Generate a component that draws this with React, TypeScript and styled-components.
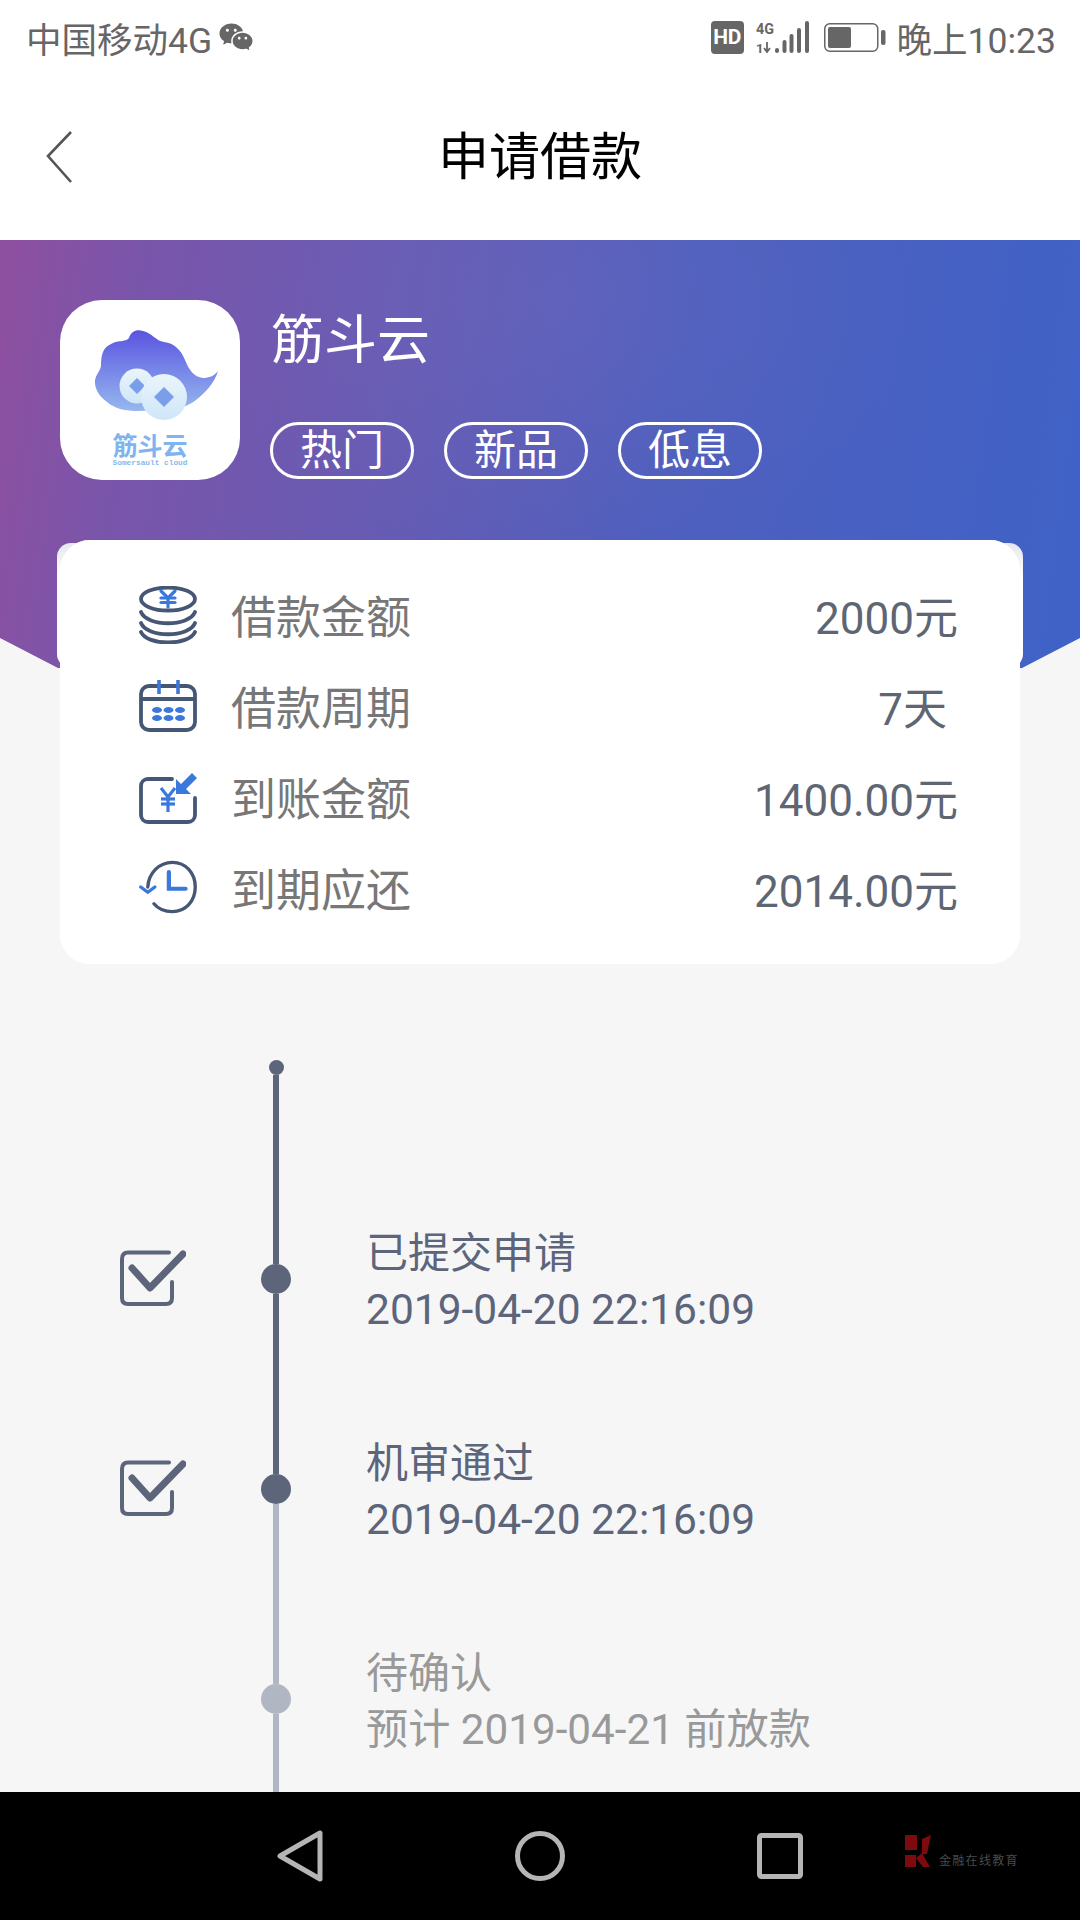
import React from "react";
import styled, { createGlobalStyle } from "styled-components";
import { RiWechatFill } from "react-icons/ri";

const GlobalStyle = createGlobalStyle`
  html, body {
    margin: 0;
    padding: 0;
    background: #f6f6f7;
  }
  * {
    box-sizing: border-box;
  }
`;

const slate = "#5c657a";
const muted = "#b0b6c2";
const iconDark = "#465775";
const iconBlue = "#3b78dc";

const Page = styled.div`
  width: 1080px;
  height: 1920px;
  overflow: hidden;
  display: flex;
  flex-direction: column;
  background: #f6f6f7;
  font-family: Roboto, "Noto Sans CJK SC", sans-serif;
`;

const StatusBar = styled.div`
  height: 74px;
  padding: 0 24px 0 26px;
  display: flex;
  align-items: center;
  justify-content: space-between;
  background: #fff;
  color: #666;
  font-size: 35.5px;
`;

const StatusGroup = styled.div`
  display: flex;
  align-items: center;
`;

const Carrier = styled.span`
  margin-right: 6px;
`;

const HdBadge = styled.span`
  width: 33px;
  height: 33px;
  margin-right: 12px;
  border-radius: 4px;
  background: #666;
  color: #fff;
  font-size: 21px;
  font-weight: 700;
  line-height: 33px;
  text-align: center;
  letter-spacing: -0.5px;
`;

const Clock = styled.span`
  margin-left: 11px;
`;

const TopBar = styled.div`
  height: 166px;
  padding: 0 46px;
  display: grid;
  grid-template-columns: 1fr auto 1fr;
  align-items: center;
  background: #fff;
`;

const Title = styled.h1`
  margin: 0;
  color: #000;
  font-size: 51px;
  font-weight: 400;
  line-height: 1;
`;

const Banner = styled.div`
  height: 440px;
  padding: 60px 0 0 60px;
  display: flex;
  gap: 30px;
  align-items: flex-start;
  clip-path: polygon(0 0, 100% 0, 100% 398px, 1022px 428px, 540px 440px, 58px 428px, 0 398px);
  background:
    radial-gradient(ellipse 380px 260px at 560px 60px, rgba(130, 120, 200, 0.18), transparent),
    linear-gradient(98deg, #8f4f9f 0%, #7a55aa 12%, #675bb3 36%, #4f5fbd 60%, #3f62c7 100%);
`;

const LogoTile = styled.div`
  width: 180px;
  height: 180px;
  flex: none;
  border-radius: 42px;
  background: #fff;
  overflow: hidden;
`;

const Product = styled.div`
  display: flex;
  flex-direction: column;
  padding-top: 9px;
`;

const ProductName = styled.div`
  color: #fff;
  font-size: 53px;
  line-height: 64px;
  margin-left: 1px;
`;

const Tags = styled.div`
  margin-top: 49px;
  display: flex;
  gap: 30px;
`;

const Tag = styled.span`
  width: 144px;
  height: 57px;
  border: 3px solid #fff;
  border-radius: 29px;
  color: #fff;
  font-size: 42px;
  line-height: 51px;
  text-align: center;
`;

const Card = styled.section`
  position: relative;
  margin: -140px 60px 0;
  height: 424px;
  padding: 29px 62px 0 79px;
  border-radius: 30px;
  background: #fff;

  &::before {
    content: "";
    position: absolute;
    z-index: 0;
    top: 3px;
    left: -3px;
    right: -3px;
    height: 125px;
    border-radius: 14px;
    background: linear-gradient(#e6e6ee, #fff 34px);
  }

  &::after {
    content: "";
    position: absolute;
    z-index: 0;
    inset: 0;
    border-radius: 30px;
    background: #fff;
  }
`;

const CardRow = styled.div`
  position: relative;
  z-index: 1;
  height: 91px;
  display: flex;
  align-items: center;
`;

const IconSlot = styled.div<{ $nudge: number }>`
  width: 58px;
  margin-right: 34px;
  flex: none;
  display: flex;
  justify-content: center;
  transform: translateY(${(p) => p.$nudge}px);
`;

const RowLabel = styled.span`
  flex: 1;
  color: #777;
  font-size: 45px;
`;

const RowValue = styled.span`
  color: #5e6673;
  font-size: 44px;
  white-space: pre;
`;

const Timeline = styled.div`
  flex: 1;
  margin-top: 96px;
  padding-left: 120px;
  overflow: hidden;
`;

const Lead = styled.div`
  width: 30px;
  height: 114px;
  margin-left: 141px;
  display: flex;
  flex-direction: column;
  align-items: center;
`;

const LeadDot = styled.span`
  width: 15px;
  height: 15px;
  flex: none;
  border-radius: 50%;
  background: ${slate};
`;

const Step = styled.div`
  height: 210px;
  display: grid;
  grid-template-columns: 141px 30px 1fr;
  align-items: center;
`;

const CheckCell = styled.div`
  height: 56px;
  margin-top: -2px;
`;

const Rail = styled.div`
  height: 100%;
  display: flex;
  flex-direction: column;
  align-items: center;
`;

const Segment = styled.span<{ $done: boolean }>`
  width: 6px;
  flex: 1;
  background: ${(p) => (p.$done ? slate : muted)};
`;

const Node = styled.span<{ $done: boolean }>`
  width: 30px;
  height: 30px;
  flex: none;
  border-radius: 50%;
  background: ${(p) => (p.$done ? slate : muted)};
`;

const StepText = styled.div<{ $done: boolean }>`
  margin: 5px 0 0 75px;
  color: ${(p) => (p.$done ? slate : "#999")};
  line-height: 56px;
  white-space: nowrap;
`;

const StepTitle = styled.div`
  font-size: 42px;
`;

const StepDetail = styled.div<{ $done: boolean }>`
  font-size: ${(p) => (p.$done ? "42.5px" : "42.2px")};
`;

const NavBar = styled.nav`
  position: relative;
  height: 128px;
  flex: none;
  background: #000;
  display: flex;
  align-items: center;
  padding: 0 0 0 277px;
  gap: 192px;
`;

const Watermark = styled.div`
  position: absolute;
  left: 903px;
  top: 43px;
  display: flex;
  align-items: flex-end;
  gap: 6px;
`;

const WatermarkText = styled.span`
  color: #4a4a4a;
  font-size: 12px;
  line-height: 14px;
  letter-spacing: 1.3px;
`;

const LogoMark = () => (
  <svg width="180" height="180" viewBox="0 0 180 180">
    <defs>
      <linearGradient id="cloud" x1="0" y1="0" x2="0" y2="1">
        <stop offset="0" stopColor="#5a54e0" />
        <stop offset="1" stopColor="#96b8ef" />
      </linearGradient>
      <linearGradient id="coin" x1="0" y1="0" x2="0" y2="1">
        <stop offset="0" stopColor="#eaf5fb" />
        <stop offset="1" stopColor="#cfe6f8" />
      </linearGradient>
    </defs>
    <path
      d="M35 84C34 76 40 72 41 66C41 54 43 47 53 43C60 40 66 42 69 38C71 31 77 29 83 31C92 33 96 41 104 42C114 43 121 50 125 60C129 70 134 77 143 78C149 78 154 76 158 71C155 82 146 92 136 100C128 106 118 110 108 110L78 111C66 111 55 109 47 102C40 97 36 91 35 84Z"
      fill="url(#cloud)"
    />
    <circle cx="77" cy="86" r="17.5" fill="url(#coin)" />
    <path d="M77 78L85 86L77 94L69 86Z" fill="#7a9ee8" />
    <circle cx="104" cy="97" r="23" fill="url(#coin)" />
    <path d="M104 87L114 97L104 107L94 97Z" fill="#7a9ee8" />
    <text x="90" y="155" textAnchor="middle" fontSize="25" fontWeight="700" fill="#7fb4ee" fontFamily="'Noto Sans CJK SC', sans-serif">
      筋斗云
    </text>
    <text x="90" y="165" textAnchor="middle" fontSize="7.8" fontWeight="700" fill="#86b8ea" fontFamily="'Liberation Mono', monospace">
      Somersault cloud
    </text>
  </svg>
);

const CoinsIcon = () => (
  <svg width="58" height="58" viewBox="0 0 58 58" fill="none" strokeLinecap="round">
    <g stroke={iconDark} strokeWidth="3.8">
      <ellipse cx="29" cy="13" rx="27" ry="11.5" />
      <path d="M2 26C8 41 50 41 56 26" />
      <path d="M2 37C8 52 50 52 56 37" />
      <path d="M2 46C8 60 50 60 56 46" />
    </g>
    <g stroke={iconBlue} strokeWidth="3.2">
      <path d="M22 5L29 12L36 5" />
      <path d="M29 12V21" />
      <path d="M22 12H36" />
      <path d="M22 16.5H36" />
    </g>
  </svg>
);

const CalendarIcon = () => (
  <svg width="58" height="52" viewBox="0 0 58 52" fill="none">
    <rect x="2" y="6" width="54" height="44" rx="8" stroke={iconDark} strokeWidth="3.8" />
    <path d="M2 19H56" stroke={iconDark} strokeWidth="3.8" />
    <path d="M20 0V14M39 0V14" stroke={iconBlue} strokeWidth="3.6" />
    <g fill={iconBlue}>
      <ellipse cx="18" cy="30" rx="5" ry="3" />
      <ellipse cx="29.5" cy="30" rx="5" ry="3" />
      <ellipse cx="41" cy="30" rx="5" ry="3" />
      <ellipse cx="18" cy="38" rx="5" ry="3" />
      <ellipse cx="29.5" cy="38" rx="5" ry="3" />
      <ellipse cx="41" cy="38" rx="5" ry="3" />
    </g>
  </svg>
);

const ReceivedIcon = () => (
  <svg width="58" height="51" viewBox="0 0 58 51" fill="none">
    <path
      d="M33 6H9C5 6 2 9 2 13V42C2 46 5 49 9 49H49C53 49 56 46 56 42V25"
      stroke={iconDark}
      strokeWidth="3.8"
      strokeLinecap="round"
    />
    <g stroke={iconBlue} strokeWidth="3.2">
      <path d="M22 15L29 24L36 15" />
      <path d="M29 24V39" />
      <path d="M22 26H36" />
      <path d="M22 31H36" />
    </g>
    <path d="M53 0L58 5L47 16L52 21H37V6L42 11Z" fill={iconBlue} />
  </svg>
);

const DueIcon = () => (
  <svg width="66" height="60" viewBox="0 0 66 60" fill="none" strokeLinecap="round">
    <path d="M10 30C11 14 23 2 38 2C53 2 64 14 64 30C64 46 53 58 38 58C29 58 22 55 17 49" stroke={iconDark} strokeWidth="3.8" />
    <path d="M2 30L10 36L18 30" stroke={iconBlue} strokeWidth="3.8" />
    <path d="M34 13V32H53" stroke={iconBlue} strokeWidth="4.8" />
  </svg>
);

const CheckIcon = () => (
  <svg width="66" height="56" viewBox="0 0 66 56" fill="none" strokeLinecap="round" strokeLinejoin="round">
    <path d="M49 2.5H8C4 2.5 2 5 2 9V48C2 52 4 54 8 54H46C50 54 52 52 52 48V32" stroke={slate} strokeWidth="4" />
    <path d="M12 18L30 38L63 4" stroke={slate} strokeWidth="7" />
  </svg>
);

const SignalIcon = () => (
  <svg width="53" height="33" viewBox="0 0 53 33" style={{ marginRight: 15 }}>
    <text x="0" y="13" fontSize="15" fontWeight="700" fill="#666" fontFamily="Roboto, sans-serif" textLength="18" lengthAdjust="spacingAndGlyphs">
      4G
    </text>
    <text x="0" y="32" fontSize="13" fontWeight="700" fill="#666" fontFamily="Roboto, sans-serif">
      1
    </text>
    <path d="M11 21V31M8 27L11 31L14 27" stroke="#666" strokeWidth="1.8" fill="none" />
    <g fill="#666">
      <rect x="19" y="27" width="4" height="5" rx="2" />
      <rect x="26.5" y="19" width="4" height="13" rx="2" />
      <rect x="33.5" y="13" width="4" height="19" rx="2" />
      <rect x="41" y="7" width="4" height="25" rx="2" />
      <rect x="49" y="0" width="4" height="32" rx="2" />
    </g>
  </svg>
);

const BatteryIcon = () => (
  <svg width="62" height="29" viewBox="0 0 62 29" fill="none">
    <rect x="0.75" y="0.75" width="53" height="27.5" rx="5" stroke="#666" strokeWidth="1.5" />
    <rect x="4" y="4" width="23" height="21" rx="2" fill="#666" />
    <rect x="57" y="7" width="4.5" height="15" rx="2" fill="#666" />
  </svg>
);

const BackIcon = () => (
  <svg width="26" height="52" viewBox="0 0 26 52" fill="none">
    <path d="M25 1L2 25L25 51" stroke="#555" strokeWidth="2.6" />
  </svg>
);

const NavBack = () => (
  <svg width="46" height="52" viewBox="0 0 46 52" fill="none">
    <path d="M43 3V49L3 26Z" stroke="#b5b5b5" strokeWidth="5" strokeLinejoin="round" />
  </svg>
);

const NavHome = () => (
  <svg width="50" height="50" viewBox="0 0 50 50" fill="none">
    <circle cx="25" cy="25" r="22.5" stroke="#b5b5b5" strokeWidth="5" />
  </svg>
);

const NavRecent = () => (
  <svg width="46" height="46" viewBox="0 0 46 46" fill="none">
    <rect x="2.5" y="2.5" width="41" height="41" rx="2" stroke="#b5b5b5" strokeWidth="5" />
  </svg>
);

const KMark = () => (
  <svg width="30" height="33" viewBox="0 0 30 33" fill="#7d0a0e">
    <path d="M2 0H14V15H2Z" />
    <path d="M19 4L28 0L24 19H19Z" />
    <path d="M2 20H13V32H2Z" />
    <path d="M13 23L19 18L27 32H20Z" />
  </svg>
);

const rows = [
  { icon: <CoinsIcon />, nudge: 0, label: "借款金额", value: "2000元" },
  { icon: <CalendarIcon />, nudge: 0, label: "借款周期", value: "7天 " },
  { icon: <ReceivedIcon />, nudge: 2, label: "到账金额", value: "1400.00元" },
  { icon: <DueIcon />, nudge: -1, label: "到期应还", value: "2014.00元" },
];

const steps = [
  { title: "已提交申请", detail: "2019-04-20 22:16:09", done: true, nextDone: true },
  { title: "机审通过", detail: "2019-04-20 22:16:09", done: true, nextDone: false },
  { title: "待确认", detail: "预计 2019-04-21 前放款", done: false, nextDone: false },
];

export default function App() {
  return (
    <Page>
      <GlobalStyle />
      <StatusBar>
        <StatusGroup>
          <Carrier>中国移动4G</Carrier>
          <RiWechatFill size={36} color="#666" />
        </StatusGroup>
        <StatusGroup>
          <HdBadge>HD</HdBadge>
          <SignalIcon />
          <BatteryIcon />
          <Clock>晚上10:23</Clock>
        </StatusGroup>
      </StatusBar>

      <TopBar>
        <BackIcon />
        <Title>申请借款</Title>
      </TopBar>

      <Banner>
        <LogoTile>
          <LogoMark />
        </LogoTile>
        <Product>
          <ProductName>筋斗云</ProductName>
          <Tags>
            <Tag>热门</Tag>
            <Tag>新品</Tag>
            <Tag>低息</Tag>
          </Tags>
        </Product>
      </Banner>

      <Card>
        {rows.map((row) => (
          <CardRow key={row.label}>
            <IconSlot $nudge={row.nudge}>{row.icon}</IconSlot>
            <RowLabel>{row.label}</RowLabel>
            <RowValue>{row.value}</RowValue>
          </CardRow>
        ))}
      </Card>

      <Timeline>
        <Lead>
          <LeadDot />
          <Segment $done />
        </Lead>
        {steps.map((step) => (
          <Step key={step.title}>
            <CheckCell>{step.done && <CheckIcon />}</CheckCell>
            <Rail>
              <Segment $done={step.done} />
              <Node $done={step.done} />
              <Segment $done={step.nextDone} />
            </Rail>
            <StepText $done={step.done}>
              <StepTitle>{step.title}</StepTitle>
              <StepDetail $done={step.done}>{step.detail}</StepDetail>
            </StepText>
          </Step>
        ))}
      </Timeline>

      <NavBar>
        <NavBack />
        <NavHome />
        <NavRecent />
        <Watermark>
          <KMark />
          <WatermarkText>金融在线教育</WatermarkText>
        </Watermark>
      </NavBar>
    </Page>
  );
}
